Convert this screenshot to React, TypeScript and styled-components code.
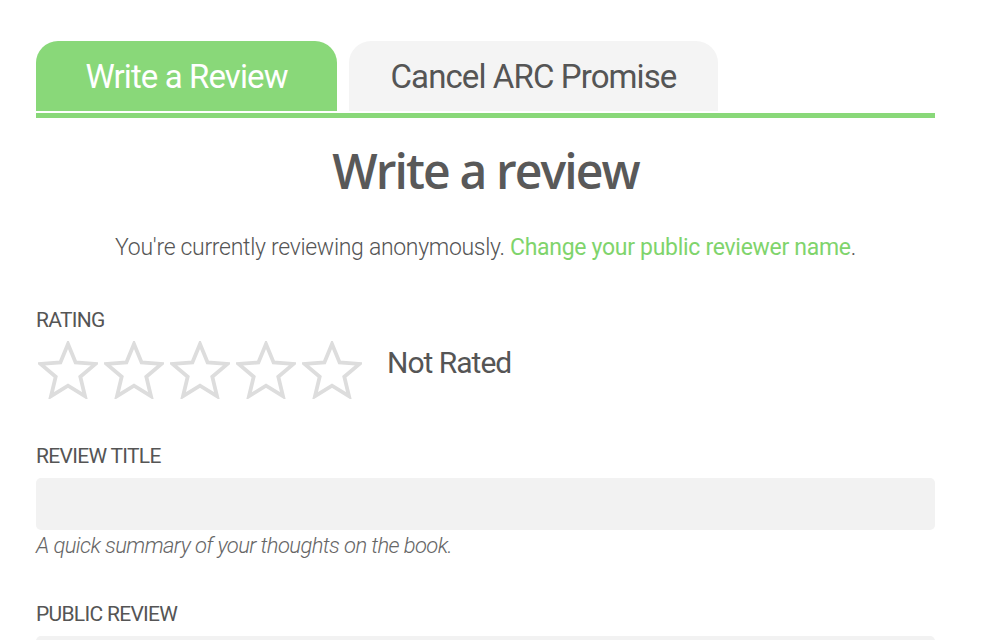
import React from "react";
import styled, { createGlobalStyle } from "styled-components";

const Global = createGlobalStyle`
  html, body { margin: 0; padding: 0; background: #ffffff; }
  body { font-family: Roboto, "Liberation Sans", sans-serif; color: #555; }
`;

const Page = styled.div`
  padding: 41px 57px 0 36px;
  width: 899px;
`;

const TabBar = styled.div`
  display: flex;
  gap: 12px;
  align-items: flex-end;
`;

const Tab = styled.div<{ $active?: boolean }>`
  height: 70px;
  box-sizing: border-box;
  border-radius: 22px 22px 0 0;
  background: ${(p) => (p.$active ? "#89d879" : "#f4f4f4")};
  color: ${(p) => (p.$active ? "#ffffff" : "#555555")};
  font-family: Roboto, sans-serif;
  font-size: 33px;
  font-weight: 400;
  letter-spacing: -0.9px;
  width: ${(p) => (p.$active ? "301px" : "369px")};
  display: flex;
  align-items: center;
  justify-content: center;
`;

const TabRule = styled.div`
  height: 5px;
  background: #89d879;
  margin-top: 2px;
`;

const Heading = styled.h1`
  margin: 25px 0 0;
  text-align: center;
  font-family: "Open Sans", sans-serif;
  font-weight: 600;
  font-size: 48px;
  line-height: 56px;
  letter-spacing: -1.9px;
  color: #595959;
`;

const Intro = styled.p`
  margin: 36px 0 0;
  text-align: center;
  font-family: Roboto, sans-serif;
  font-weight: 300;
  font-size: 23px;
  line-height: 26px;
  letter-spacing: -0.3px;
  color: #555;
`;

const Link = styled.a`
  color: #7fd46c;
  text-decoration: none;
  font-weight: 400;
`;

const Field = styled.div<{ $top: number }>`
  margin-top: ${(p) => p.$top}px;
  display: flex;
  flex-direction: column;
`;

const Label = styled.div`
  font-family: Roboto, sans-serif;
  font-size: 21px;
  line-height: 22px;
  color: #555;
  text-transform: uppercase;
  letter-spacing: -0.7px;
`;

const RatingRow = styled.div`
  display: flex;
  align-items: center;
  margin-top: 10px;
`;

const Stars = styled.div`
  display: flex;
  gap: 6px;
  margin-left: 2px;
`;

const NotRated = styled.span`
  margin-left: 25px;
  margin-top: -16px;
  font-family: Roboto, sans-serif;
  font-size: 30px;
  color: #555;
  letter-spacing: -1px;
`;

const Input = styled.div<{ $h: number }>`
  margin-top: 11px;
  height: ${(p) => p.$h}px;
  background: #f2f2f2;
  border-radius: 5px;
`;

const Hint = styled.div`
  margin-top: 5px;
  font-family: Roboto, sans-serif;
  font-style: italic;
  font-weight: 300;
  font-size: 22px;
  line-height: 22px;
  color: #666;
  letter-spacing: -0.6px;
`;

const Star = () => (
  <svg width="60" height="58" viewBox="0 0 60 58">
    <polygon
      points="30,3 37.6,21.5 57.5,22.9 42.3,35.8 47,55.2 30,44.7 13,55.2 17.7,35.8 2.5,22.9 22.4,21.5"
      fill="none"
      stroke="#dddddd"
      strokeWidth="3.8"
      strokeLinejoin="miter"
    />
  </svg>
);

export default function App() {
  return (
    <>
      <Global />
      <Page>
        <TabBar>
          <Tab $active>Write a Review</Tab>
          <Tab>Cancel ARC Promise</Tab>
        </TabBar>
        <TabRule />
        <Heading>Write a review</Heading>
        <Intro>
          You're currently reviewing anonymously.{" "}
          <Link>Change your public reviewer name</Link>.
        </Intro>
        <Field $top={48}>
          <Label>Rating</Label>
          <RatingRow>
            <Stars>
              {[0, 1, 2, 3, 4].map((i) => (
                <Star key={i} />
              ))}
            </Stars>
            <NotRated>Not Rated</NotRated>
          </RatingRow>
        </Field>
        <Field $top={46}>
          <Label>Review Title</Label>
          <Input $h={52} />
          <Hint>A quick summary of your thoughts on the book.</Hint>
        </Field>
        <Field $top={46}>
          <Label>Public Review</Label>
          <Input $h={120} />
        </Field>
      </Page>
    </>
  );
}
